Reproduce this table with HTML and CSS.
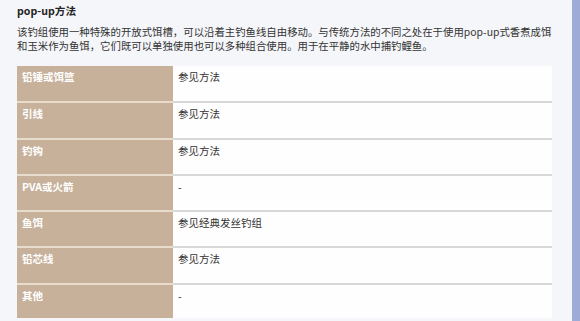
FILE: index.html
```html
<!DOCTYPE html>
<html lang="zh-CN">
<head>
<meta charset="utf-8">
<title>pop-up方法</title>
<link rel="stylesheet" href="styles.css">
</head>
<body>
<div class="page">
  <main class="content">
    <h3 class="title">pop-up方法</h3>
    <p class="desc">该钓组使用一种特殊的开放式饵槽，可以沿着主钓鱼线自由移动。与传统方法的不同之处在于使用pop-up式香煮成饵和玉米作为鱼饵，它们既可以单独使用也可以多种组合使用。用于在平静的水中捕钓鲤鱼。</p>
    <table class="rig">
      <tr><th>铅锤或饵篮</th><td>参见方法</td></tr>
      <tr><th>引线</th><td>参见方法</td></tr>
      <tr><th>钓钩</th><td>参见方法</td></tr>
      <tr><th>PVA或火箭</th><td>-</td></tr>
      <tr><th>鱼饵</th><td>参见经典发丝钓组</td></tr>
      <tr><th>铅芯线</th><td>参见方法</td></tr>
      <tr class="last"><th>其他</th><td>-</td></tr>
    </table>
  </main>
  <aside class="side"></aside>
</div>
</body>
</html>
```

FILE: styles.css
```css
html, body {
  margin: 0;
  padding: 0;
  height: 100%;
}
body {
  background: #f5f6fa;
  font-family: "Noto Sans CJK SC", "Noto Sans", sans-serif;
  color: #333;
  overflow: hidden;
}
.page {
  display: flex;
  height: 100%;
}
.content {
  flex: 1;
  padding: 0 20px 0 17px;
}
.side {
  width: 8px;
  background: #9eabd6;
}
.title {
  margin: 0;
  padding-top: 3px;
  font-size: 10.6px;
  line-height: 15px;
  font-weight: 700;
  color: #222;
}
.desc {
  margin: 7px 0 0;
  font-size: 10.4px;
  line-height: 13.5px;
  color: #333;
  width: 535px;
}
.rig {
  margin-top: 14px;
  width: 535px;
  border-collapse: collapse;
  border-spacing: 0;
}
.rig th, .rig td {
  height: 36.3px;
  box-sizing: border-box;
  padding: 4px 5px 0;
  vertical-align: top;
  text-align: left;
  font-size: 10.5px;
  line-height: 14px;
  border-bottom: 2px solid #d8d8d8;
}
.rig th {
  width: 156px;
  background: #c7b19b;
  color: #fff;
  font-weight: 700;
  border-bottom-color: #e8dccd;
}
.rig td {
  background: #fefefe;
  color: #333;
}
.rig tr.last th, .rig tr.last td {
  border-bottom: 0;
  height: 34.3px;
}
```
